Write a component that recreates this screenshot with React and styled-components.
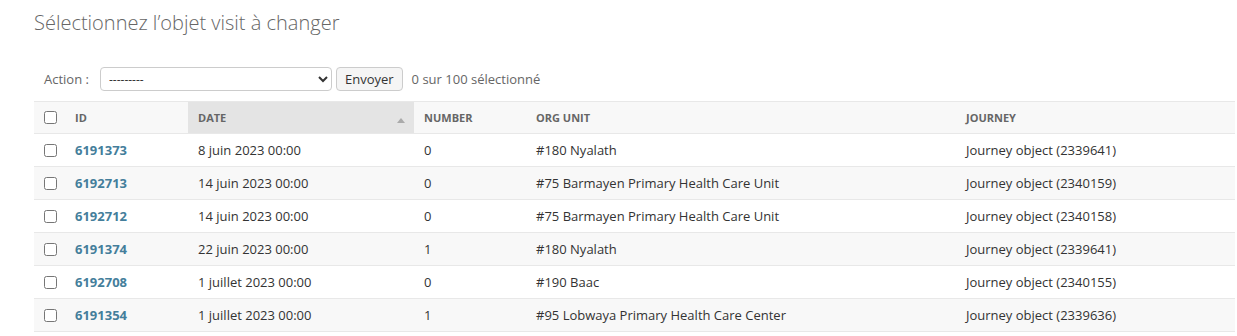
import React from "react";
import styled, { createGlobalStyle } from "styled-components";

const Global = createGlobalStyle`
  html, body { margin: 0; padding: 0; background: #fff; }
  body {
    font-family: "Open Sans", "Noto Sans", sans-serif;
    color: #333;
    font-size: 13px;
  }
`;

const Content = styled.div`
  padding: 9px 2px 0 34px;
`;

const Title = styled.h1`
  margin: 0;
  font-size: 20px;
  font-weight: 300;
  color: #666;
  line-height: 28px;
`;

const ActionBar = styled.div`
  display: flex;
  align-items: center;
  height: 24px;
  margin-top: 30px;
  padding-left: 10px;
  font-size: 13px;
  color: #666;
`;

const ActionLabel = styled.label`
  margin-right: 11px;
`;

const Select = styled.select`
  width: 232px;
  height: 24px;
  border: 1px solid #ccc;
  border-radius: 4px;
  background: #fff;
  font-family: "Open Sans", sans-serif;
  font-size: 12px;
  color: #333;
  padding: 0 4px;
`;

const Button = styled.button`
  margin-left: 4px;
  height: 24px;
  padding: 0 8px;
  border: 1px solid #ccc;
  border-radius: 4px;
  background: #f5f5f5;
  font-family: "Open Sans", sans-serif;
  font-size: 13px;
  color: #333;
`;

const Counter = styled.span`
  margin-left: 9px;
`;

const Table = styled.table`
  margin-top: 10px;
  width: 1201px;
  border-collapse: collapse;
  table-layout: fixed;
`;

const Th = styled.th`
  position: relative;
  height: 31px;
  padding: 0 0 0 10px;
  text-align: left;
  vertical-align: middle;
  font-size: 11px;
  font-weight: 700;
  text-transform: uppercase;
  color: #666;
  background: ${(p) => (p.$sorted ? "#e4e4e4" : "#f8f8f8")};
  border-top: 1px solid #e8e8e8;
  border-bottom: 1px solid #e8e8e8;
`;

const SortArrow = styled.span`
  position: absolute;
  right: 9px;
  top: 16px;
  width: 0;
  height: 0;
  border-left: 4px solid transparent;
  border-right: 4px solid transparent;
  border-bottom: 5px solid #aaa;
`;

const Row = styled.tr`
  background: ${(p) => (p.$even ? "#f8f8f8" : "#fff")};
`;

const Td = styled.td`
  height: 32px;
  padding: 0 0 0 10px;
  vertical-align: middle;
  border-bottom: 1px solid #e8e8e8;
  font-size: 13px;
  color: #333;
  white-space: nowrap;
`;

const Check = styled.input.attrs({ type: "checkbox" })`
  margin: 0;
  width: 13px;
  height: 13px;
  display: block;
`;

const IdLink = styled.a`
  color: #447e9b;
  font-weight: 700;
  text-decoration: none;
`;

const rows = [
  ["6191373", "8 juin 2023 00:00", "0", "#180 Nyalath", "Journey object (2339641)"],
  ["6192713", "14 juin 2023 00:00", "0", "#75 Barmayen Primary Health Care Unit", "Journey object (2340159)"],
  ["6192712", "14 juin 2023 00:00", "0", "#75 Barmayen Primary Health Care Unit", "Journey object (2340158)"],
  ["6191374", "22 juin 2023 00:00", "1", "#180 Nyalath", "Journey object (2339641)"],
  ["6192708", "1 juillet 2023 00:00", "0", "#190 Baac", "Journey object (2340155)"],
  ["6191354", "1 juillet 2023 00:00", "1", "#95 Lobwaya Primary Health Care Center", "Journey object (2339636)"],
];

export default function App() {
  return (
    <>
      <Global />
      <Content>
        <Title>Sélectionnez l’objet visit à changer</Title>
        <ActionBar>
          <ActionLabel>Action :</ActionLabel>
          <Select defaultValue="">
            <option value="">---------</option>
          </Select>
          <Button>Envoyer</Button>
          <Counter>0 sur 100 sélectionné</Counter>
        </ActionBar>
        <Table>
          <colgroup>
            <col style={{ width: 31 }} />
            <col style={{ width: 123 }} />
            <col style={{ width: 226 }} />
            <col style={{ width: 112 }} />
            <col style={{ width: 430 }} />
            <col style={{ width: 279 }} />
          </colgroup>
          <thead>
            <tr>
              <Th><Check /></Th>
              <Th>ID</Th>
              <Th $sorted>Date<SortArrow /></Th>
              <Th>Number</Th>
              <Th>Org unit</Th>
              <Th>Journey</Th>
            </tr>
          </thead>
          <tbody>
            {rows.map((r, i) => (
              <Row key={r[0]} $even={i % 2 === 1}>
                <Td><Check /></Td>
                <Td><IdLink href="#">{r[0]}</IdLink></Td>
                <Td>{r[1]}</Td>
                <Td>{r[2]}</Td>
                <Td>{r[3]}</Td>
                <Td>{r[4]}</Td>
              </Row>
            ))}
          </tbody>
        </Table>
      </Content>
    </>
  );
}
